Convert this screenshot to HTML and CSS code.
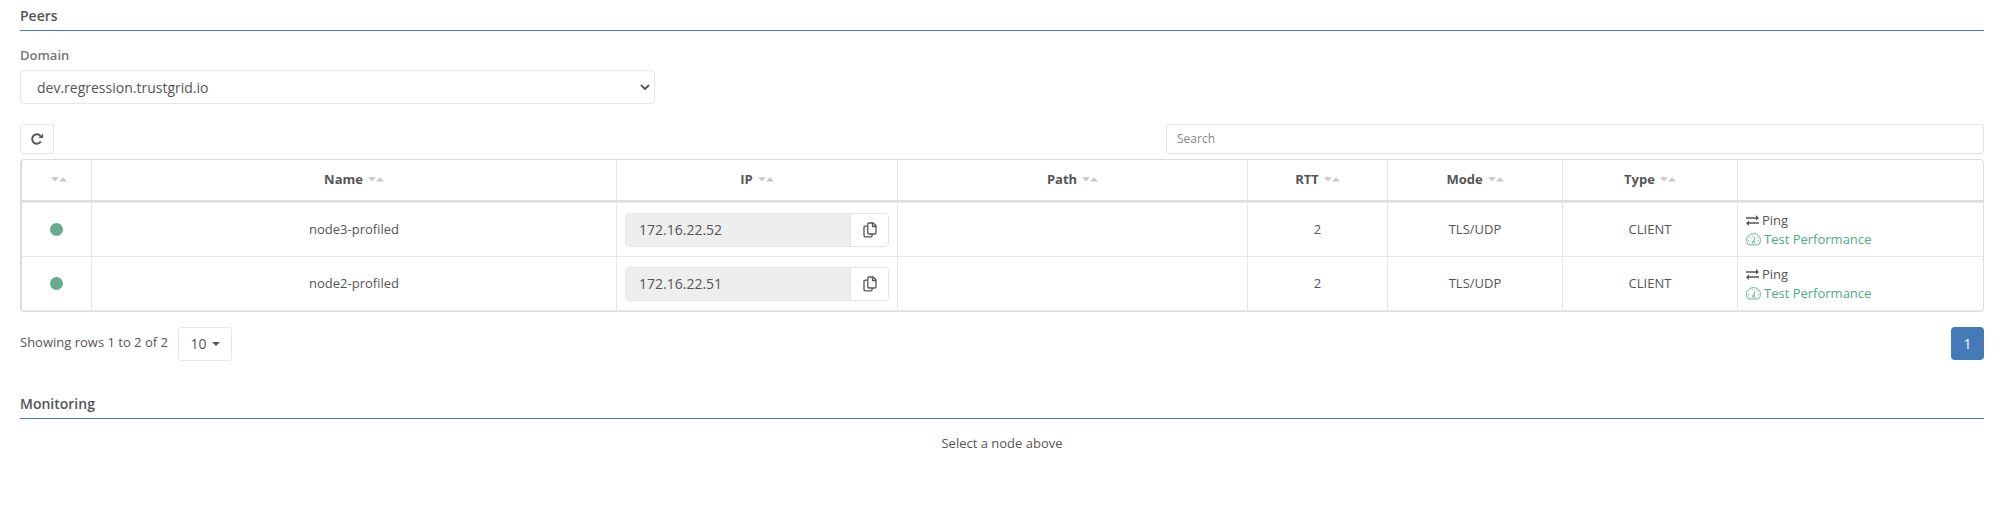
FILE: index.html
```html
<!DOCTYPE html>
<html lang="en">
<head>
<meta charset="utf-8">
<title>Peers</title>
<link rel="stylesheet" href="styles.css">
</head>
<body>
<svg class="defs" width="0" height="0">
  <symbol id="copy" viewBox="0 0 14 16"><path d="M4 4.2H2.2Q1 4.2 1 5.4V13.6Q1 14.8 2.2 14.8H8Q9.1 14.8 9.1 13.6V12.4M6 1H10.2L13 3.8V10.8Q13 12 11.8 12H6Q4.8 12 4.8 10.8V2.2Q4.8 1 6 1ZM9.5 1.3V4.5H12.8" fill="none" stroke="currentColor" stroke-width="1.3" stroke-linejoin="round"/></symbol>
  <symbol id="swap" viewBox="0 0 13 11"><path d="M0 3H11M2 8H13" stroke="currentColor" stroke-width="1.5" fill="none"/><path d="M10 0L13 3L10 5.5ZM3 5.5L0 8L3 11Z" fill="currentColor"/></symbol>
  <symbol id="gauge" viewBox="0 0 15 13"><path d="M2.5 11.9Q.5 10 .5 7.2A7 6.6 0 0 1 14.5 7.2Q14.5 10 12.5 11.9ZM7.9 8.2L8.8 3.8M2 7.6H3.3M11.7 7.6H13M3.4 3.9L4.2 4.7M11.6 3.9L10.8 4.7M6.6 2.2V3.2" fill="none" stroke="currentColor" stroke-width=".85"/><circle cx="7.5" cy="9.2" r="1.2" fill="none" stroke="currentColor" stroke-width=".9"/></symbol>
  <symbol id="sort" viewBox="0 0 16 5"><path d="M0 .3H8L4 4.6ZM8 4.5H16L12 .3Z" fill="#c8c8c8"/></symbol>
</svg>
<main class="page">
  <h2 class="section-title">Peers</h2>
  <label class="label" for="domain">Domain</label>
  <div class="select" id="domain"><span>dev.regression.trustgrid.io</span><svg width="10" height="7" viewBox="0 0 10 7"><path d="M1 1L5 5L9 1" fill="none" stroke="#555" stroke-width="1.8"/></svg></div>
  <div class="toolbar">
    <button class="refresh" aria-label="Refresh"><svg width="13" height="12" viewBox="0 0 13 12"><path d="M9.8 8.6A4.7 4.7 0 1 1 9.4 2.9" fill="none" stroke="currentColor" stroke-width="1.9"/><path d="M12.2 .4V5H7.4Z" fill="currentColor"/></svg></button>
    <input class="search" placeholder="Search">
  </div>
  <div class="table">
    <div class="row head">
      <div class="cell"><svg class="sort"><use href="#sort"/></svg></div>
      <div class="cell">Name<svg class="sort"><use href="#sort"/></svg></div>
      <div class="cell">IP<svg class="sort"><use href="#sort"/></svg></div>
      <div class="cell">Path<svg class="sort"><use href="#sort"/></svg></div>
      <div class="cell">RTT<svg class="sort"><use href="#sort"/></svg></div>
      <div class="cell">Mode<svg class="sort"><use href="#sort"/></svg></div>
      <div class="cell">Type<svg class="sort"><use href="#sort"/></svg></div>
      <div class="cell"></div>
    </div>
    <div class="row">
      <div class="cell"><span class="dot"></span></div>
      <div class="cell">node3-profiled</div>
      <div class="cell ip-cell"><div class="ip"><span class="ip-value">172.16.22.52</span><button class="copy" aria-label="Copy"><svg width="14" height="16"><use href="#copy"/></svg></button></div></div>
      <div class="cell"></div>
      <div class="cell">2</div>
      <div class="cell">TLS/UDP</div>
      <div class="cell">CLIENT</div>
      <div class="cell actions"><a class="action"><svg width="13" height="11"><use href="#swap"/></svg>Ping</a><a class="action test"><svg width="15" height="13"><use href="#gauge"/></svg>Test Performance</a></div>
    </div>
    <div class="row">
      <div class="cell"><span class="dot"></span></div>
      <div class="cell">node2-profiled</div>
      <div class="cell ip-cell"><div class="ip"><span class="ip-value">172.16.22.51</span><button class="copy" aria-label="Copy"><svg width="14" height="16"><use href="#copy"/></svg></button></div></div>
      <div class="cell"></div>
      <div class="cell">2</div>
      <div class="cell">TLS/UDP</div>
      <div class="cell">CLIENT</div>
      <div class="cell actions"><a class="action"><svg width="13" height="11"><use href="#swap"/></svg>Ping</a><a class="action test"><svg width="15" height="13"><use href="#gauge"/></svg>Test Performance</a></div>
    </div>
  </div>
  <div class="pager">
    <span class="summary">Showing rows 1 to 2 of 2</span>
    <button class="size">10<span class="caret"></span></button>
    <button class="current">1</button>
  </div>
  <h2 class="section-title monitoring">Monitoring</h2>
  <p class="hint">Select a node above</p>
</main>
</body>
</html>
```
FILE: styles.css
```css
* { box-sizing: border-box; }
body { margin: 0; background: #fff; color: #555; font: 13px/19px "Open Sans", sans-serif; }
button { padding: 0; margin: 0; background: #fff; color: #555; font: inherit; }
.defs { display: none; }
svg { display: block; flex: none; }
.page { padding: 0 16px 0 20px; }
.section-title { height: 31px; margin: 0; padding-top: 6px; border-bottom: 1px solid #4272d7; font-size: 14px; line-height: 20px; font-weight: 600; }
.label { display: block; height: 39px; padding-top: 15px; color: #777; font-weight: 600; }
.select { display: flex; align-items: center; justify-content: space-between; width: 635px; height: 34px; padding: 0 4px 0 16px; border: 1px solid #e5e6e7; border-radius: 4px; font-size: 14px; }
.toolbar { display: flex; justify-content: space-between; margin-top: 20px; }
.refresh { display: flex; align-items: center; justify-content: center; width: 34px; height: 30px; border: 1px solid #e7e7e7; border-radius: 3px 0 0 3px; }
.search { width: 818px; height: 30px; padding: 0 10px 2px; border: 1px solid #e5e6e7; border-radius: 3px; font: 12px "Open Sans", sans-serif; }
.search::placeholder { color: #888; opacity: 1; }
.table { margin-top: 5px; border: 1px solid #ddd; border-left-width: 2px; border-radius: 4px; }
.row { display: grid; grid-template-columns: 70px 525px 281px 350px 140px 175px 175px 1fr; height: 54px; border-bottom: 1px solid #e7e7e7; }
.head { height: 42px; border-bottom: 2px solid #ddd; font-weight: 700; }
.head + .row { height: 55px; border-top: 1px solid #e7e7e7; }
.cell { display: flex; align-items: center; justify-content: center; border-right: 1px solid #e7e7e7; }
.head .cell { padding-bottom: 1px; }
.cell:last-child { border-right: 0; }
.sort { width: 16px; height: 5px; margin-left: 5px; }
.dot { width: 13px; height: 13px; border-radius: 50%; background: #66ac8e; }
.ip-cell { padding: 0 8px; }
.ip { display: flex; width: 264px; height: 34px; border: 1px solid #e5e6e7; border-radius: 4px; overflow: hidden; }
.ip-value { flex: 1; padding: 6px 13px 7px; background: #eee; font-size: 14px; }
.copy { display: flex; align-items: center; justify-content: center; width: 38px; border: 0; border-left: 1px solid #e5e6e7; }
.actions { flex-direction: column; align-items: flex-start; padding-left: 8px; }
.action { display: flex; align-items: center; gap: 3px; height: 19px; }
.test { color: #4dab85; }
.pager { display: flex; align-items: flex-start; margin-top: 15px; height: 34px; }
.summary { width: 158px; padding-top: 6px; }
.size { display: flex; align-items: center; justify-content: center; gap: 5px; width: 54px; height: 34px; padding-bottom: 1px; border: 1px solid #e5e6e7; border-radius: 3px; font-size: 14px; }
.caret { border: 4px solid transparent; border-top-color: #555; border-bottom: 0; }
.current { width: 33px; height: 33px; margin-left: auto; padding-bottom: 1px; border: 0; border-radius: 4px; background: #447ab7; color: #fff; font-size: 14px; }
.monitoring { margin-top: 27px; }
.hint { margin: 15px 0 0; text-align: center; }
```
